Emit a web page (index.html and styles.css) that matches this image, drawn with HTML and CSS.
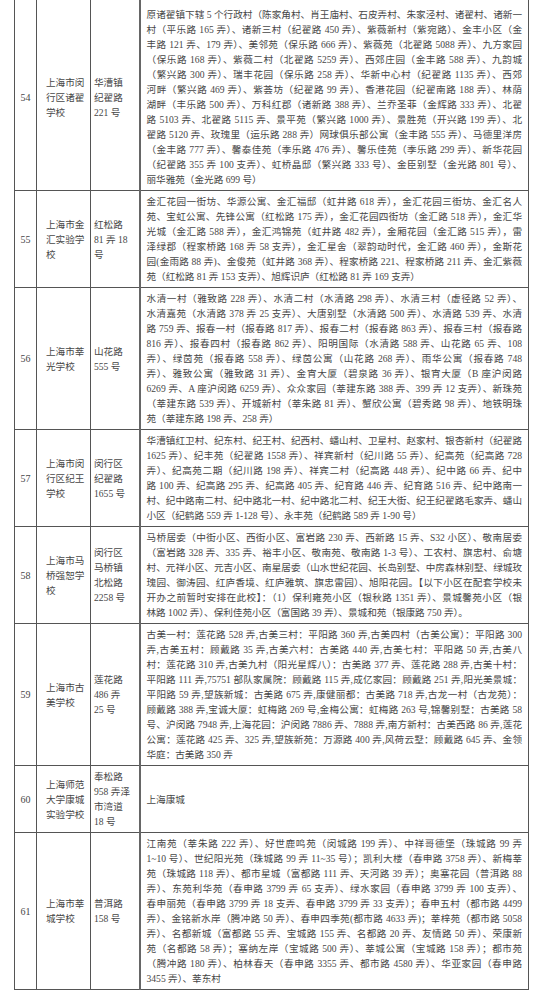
FILE: index.html
```html
<!DOCTYPE html>
<html lang="zh-CN">
<head>
<meta charset="utf-8">
<title>对口小区表</title>
<link rel="stylesheet" href="styles.css">
</head>
<body>
<table class="tbl">
  <colgroup>
    <col class="c-num"><col class="c-name"><col class="c-addr"><col class="c-cont">
  </colgroup>
  <tr class="first">
    <td class="num">54</td>
    <td class="name">上海市闵<br>行区诸翟<br>学校</td>
    <td class="addr">华漕镇<br>纪翟路<br>221 号</td>
    <td class="cont">
      <span class="ln">原诸翟镇下辖 5 个行政村（陈家角村、肖王庙村、石皮弄村、朱家泾村、诸翟村、诸新一</span>
      <span class="ln">村（平乐路 165 弄）、诸新三村（纪翟路 450 弄）、紫薇新村（紫宛路）、金丰小区（金</span>
      <span class="ln">丰路 121 弄、179 弄）、美邻苑（保乐路 666 弄）、紫薇苑（北翟路 5088 弄）、九方家园</span>
      <span class="ln">（保乐路 168 弄）、紫薇二村（北翟路 5259 弄）、西郊庄园（金丰路 588 弄）、九韵城</span>
      <span class="ln">（繁兴路 300 弄）、瑞丰花园（保乐路 258 弄）、华新中心村（纪翟路 1135 弄）、西郊</span>
      <span class="ln">河畔（繁兴路 469 弄）、紫荟坊（纪翟路 99 弄）、香港花园（纪翟南路 188 弄）、林荫</span>
      <span class="ln">湖畔（丰乐路 500 弄）、万科红郡（诸新路 388 弄）、兰乔圣菲（金辉路 333 弄）、北翟</span>
      <span class="ln">路 5103 弄、北翟路 5115 弄、景平苑（繁兴路 1000 弄）、景胜苑（开兴路 199 弄）、北</span>
      <span class="ln">翟路 5120 弄、玫瑰里（运乐路 288 弄）网球俱乐部公寓（金丰路 555 弄）、马德里洋房</span>
      <span class="ln">（金丰路 777 弄）、馨泰佳苑（季乐路 476 弄）、馨乐佳苑（季乐路 299 弄）、新华花园</span>
      <span class="ln">（纪翟路 355 弄 100 支弄）、虹桥晶邸（繁兴路 333 号）、金臣别墅（金光路 801 号）、</span>
      <span class="ln end">丽华雅苑（金光路 699 号）</span>
    </td>
  </tr>
  <tr>
    <td class="num">55</td>
    <td class="name">上海市金<br>汇实验学<br>校</td>
    <td class="addr">红松路<br>81 弄 18<br>号</td>
    <td class="cont">
      <span class="ln">金汇花园一街坊、华源公寓、金汇福邸（虹井路 618 弄），金汇花园三街坊、金汇名人</span>
      <span class="ln">苑、宝虹公寓、先锋公寓（红松路 175 弄），金汇花园四街坊（金汇路 518 弄），金汇华</span>
      <span class="ln">光城（金汇路 588 弄），金汇鸿锦苑（虹井路 482 弄），金厢花园（金汇路 515 弄），雷</span>
      <span class="ln">泽绿郡（程家桥路 168 弄 58 支弄），金汇星舍（翠韵动时代，金汇路 460 弄），金斯花</span>
      <span class="ln">园(金雨路 88 弄)、金俊苑（虹井路 368 弄）、程家桥路 221、程家桥路 211 弄、金汇紫薇</span>
      <span class="ln end">苑（红松路 81 弄 153 支弄）、旭辉识庐（红松路 81 弄 169 支弄）</span>
    </td>
  </tr>
  <tr>
    <td class="num">56</td>
    <td class="name">上海市莘<br>光学校</td>
    <td class="addr">山花路<br>555 号</td>
    <td class="cont">
      <span class="ln">水清一村（雅致路 228 弄）、水清二村（水清路 298 弄）、水清三村（虚径路 52 弄）、</span>
      <span class="ln">水清嘉苑（水清路 378 弄 25 支弄）、大唐别墅（水清路 500 弄）、水清路 539 弄、水清</span>
      <span class="ln">路 759 弄、报春一村（报春路 817 弄）、报春二村（报春路 863 弄）、报春三村（报春路</span>
      <span class="ln">816 弄）、报春四村（报春路 862 弄）、阳明国际（水清路 588 弄、山花路 65 弄、108</span>
      <span class="ln">弄）、绿茵苑（报春路 558 弄）、绿茵公寓（山花路 268 弄）、雨华公寓（报春路 748</span>
      <span class="ln">弄）、雅致公寓（雅致路 31 弄）、金宵大厦（碧泉路 36 弄）、银宵大厦（B 座沪闵路</span>
      <span class="ln">6269 弄、A 座沪闵路 6259 弄）、众众家园（莘建东路 388 弄、399 弄 12 支弄）、新珠苑</span>
      <span class="ln">（莘建东路 539 弄）、开城新村（莘朱路 81 弄）、蟹欣公寓（碧秀路 98 弄）、地铁明珠</span>
      <span class="ln end">苑（莘建东路 198 弄、258 弄）</span>
    </td>
  </tr>
  <tr>
    <td class="num">57</td>
    <td class="name">上海市闵<br>行区纪王<br>学校</td>
    <td class="addr">闵行区<br>纪翟路<br>1655 号</td>
    <td class="cont">
      <span class="ln">华漕镇红卫村、纪东村、纪王村、纪西村、蟠山村、卫星村、赵家村、银杏新村（纪翟路</span>
      <span class="ln">1625 弄）、纪丰苑（纪翟路 1558 弄）、祥宾新村（纪川路 55 弄）、纪高苑（纪高路 728</span>
      <span class="ln">弄）、纪高苑二期（纪川路 198 弄）、祥宾二村（纪高路 448 弄）、纪中路 66 弄、纪中</span>
      <span class="ln">路 100 弄、纪高路 295 弄、纪高路 405 弄、纪育路 446 弄、纪育路 516 弄、纪中路南一</span>
      <span class="ln">村、纪中路南二村、纪中路北一村、纪中路北二村、纪王大街、纪王纪翟路毛家弄、蟠山</span>
      <span class="ln end">小区（纪鹤路 559 弄 1-128 号）、永丰苑（纪鹤路 589 弄 1-90 号）</span>
    </td>
  </tr>
  <tr>
    <td class="num">58</td>
    <td class="name">上海市马<br>桥强恕学<br>校</td>
    <td class="addr">闵行区<br>马桥镇<br>北松路<br>2258 号</td>
    <td class="cont">
      <span class="ln">马桥居委（中街小区、西街小区、富岩路 230 弄、西新路 15 弄、S32 小区）、敬南居委</span>
      <span class="ln">（富岩路 328 弄、335 弄、裕丰小区、敬南苑、敬南路 1-3 号）、工农村、旗忠村、俞塘</span>
      <span class="ln">村、元祥小区、元吉小区、南星居委（山水世纪花园、长岛别墅、中房森林别墅、绿城玫</span>
      <span class="ln">瑰园、御涛园、红庐香境、红庐雅筑、旗忠雷园）、旭阳花园。【以下小区在配套学校未</span>
      <span class="ln">开办之前暂时安排在此校】：（1）保利雍苑小区（银秋路 1351 弄）、景城馨苑小区（银</span>
      <span class="ln end">林路 1002 弄）、保利佳苑小区（富国路 39 弄）、景城和苑（银康路 750 弄）。</span>
    </td>
  </tr>
  <tr>
    <td class="num">59</td>
    <td class="name">上海市古<br>美学校</td>
    <td class="addr">莲花路<br>486 弄<br>25 号</td>
    <td class="cont">
      <span class="ln">古美一村：莲花路 528 弄,古美三村：平阳路 360 弄,古美四村（古美公寓）：平阳路 300</span>
      <span class="ln">弄,古美五村：顾戴路 35 弄,古美六村：古美路 440 弄,古美七村：平阳路 50 弄,古美八</span>
      <span class="ln">村：莲花路 310 弄,古美九村（阳光星辉八）：古美路 377 弄、莲花路 288 弄,古美十村：</span>
      <span class="ln">平阳路 111 弄,75751 部队家属院：顾戴路 115 弄,成亿家园：顾戴路 251 弄,阳光美景城：</span>
      <span class="ln">平阳路 59 弄,望族新城：古美路 675 弄,康健丽都：古美路 718 弄,古龙一村（古龙苑）：</span>
      <span class="ln">顾戴路 388 弄,宝诚大厦：虹梅路 269 号,金梅公寓：虹梅路 263 号,锦馨别墅：古美路 58</span>
      <span class="ln">号、沪闵路 7948 弄,上海花园：沪闵路 7886 弄、7888 弄,南方新村：古美西路 86 弄,莲花</span>
      <span class="ln">公寓：莲花路 425 弄、325 弄,望族新苑：万源路 400 弄,风荷云墅：顾戴路 645 弄、金领</span>
      <span class="ln end">华庭：古美路 350 弄</span>
    </td>
  </tr>
  <tr>
    <td class="num">60</td>
    <td class="name">上海师范<br>大学康城<br>实验学校</td>
    <td class="addr">奉松路<br>958 弄泽<br>市湾道<br>18 号</td>
    <td class="cont mid">上海康城</td>
  </tr>
  <tr>
    <td class="num">61</td>
    <td class="name">上海市莘<br>城学校</td>
    <td class="addr">普洱路<br>158 号</td>
    <td class="cont">
      <span class="ln">江南苑（莘朱路 222 弄）、好世鹿鸣苑（闵城路 199 弄）、中祥哥德堡（珠城路 99 弄</span>
      <span class="ln">1~10 号）、世纪阳光苑（珠城路 99 弄 11~35 号）；凯利大楼（春申路 3758 弄）、新梅莘</span>
      <span class="ln">苑（珠城路 118 弄）、都市星城（富都路 111 弄、天河路 39 弄）；奥塞花园（普洱路 88</span>
      <span class="ln">弄）、东苑利华苑（春申路 3799 弄 65 支弄）、绿水家园（春申路 3799 弄 100 支弄）、</span>
      <span class="ln">春申丽苑（春申路 3799 弄 18 支弄、春申路 3799 弄 33 支弄）；春申五村（都市路 4499</span>
      <span class="ln">弄）、金铭新水岸（腾冲路 50 弄）、春申四季苑(都市路 4633 弄)；莘梓苑（都市路 5058</span>
      <span class="ln">弄）、名都新城（富都路 55 弄、宝城路 155 弄、名都路 20 弄、友情路 50 弄）、荣康新</span>
      <span class="ln">苑（名都路 58 弄）；塞纳左岸（宝城路 500 弄）、莘城公寓（宝城路 158 弄）；都市苑</span>
      <span class="ln">（腾冲路 180 弄）、柏林春天（春申路 3355 弄、都市路 4580 弄）、华亚家园（春申路</span>
      <span class="ln end">3455 弄）、莘东村</span>
    </td>
  </tr>
</table>
</body>
</html>
```

FILE: styles.css
```css
html, body {
  margin: 0;
  padding: 0;
  background: #ffffff;
}

body {
  font-family: "Liberation Serif", "Noto Sans CJK SC", serif;
  font-size: 9.6px;
  line-height: 15px;
  color: #474747;
}

.tbl {
  margin-left: 14px;
  width: 514px;
  border-collapse: collapse;
  table-layout: fixed;
}

.c-num { width: 22px; }
.c-name { width: 54px; }
.c-addr { width: 49px; }
.c-cont { width: 389px; }

.tbl td {
  border: 1px solid #555555;
  vertical-align: middle;
  padding: 3px 3px;
  line-height: 15px;
}

.tbl tr.first td {
  border-top: none;
  padding-top: 7px;
}

.tbl td.num {
  text-align: center;
  padding-left: 0;
  padding-right: 0;
  font-size: 10px;
}

.tbl td.name {
  padding-left: 9px;
  padding-right: 3px;
  text-align: left;
}

.tbl td.addr {
  padding-left: 3px;
  padding-right: 2px;
  text-align: left;
}

.tbl td.cont {
  border-left: 2px solid #666666;
  padding-left: 6px;
  padding-right: 6px;
}

.tbl td.mid {
  text-align: left;
}

.ln {
  display: block;
  white-space: nowrap;
  text-align: justify;
  text-align-last: justify;
}

.ln.end {
  text-align: left;
  text-align-last: left;
}
```
